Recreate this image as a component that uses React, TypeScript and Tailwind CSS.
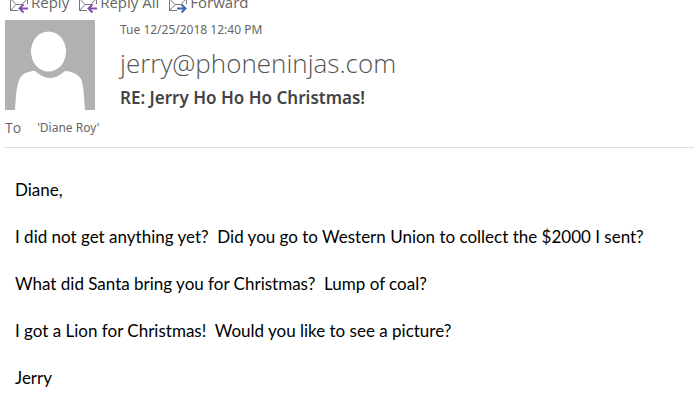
import React from "react";

type ActionProps = { label: string; color: string; forward?: boolean };

function MailAction({ label, color, forward = false }: ActionProps) {
  return (
    <button type="button" className="flex items-start gap-[3px] text-[15px] leading-5 text-[#666666]">
      <svg viewBox="0 0 20 20" className="mt-1 h-5 w-5" fill="none" aria-hidden="true">
        <path d="M10 14.500H2.500V1.500H19.500V8" stroke="#777777" />
        <path d="M2.500 2.500L8 8.500H14L19.500 2.500M2.500 14.500L8 8.500" stroke="#777777" />
        {forward ? (
          <path d="M10 12.500H18M14.500 8.500L18.500 12.500L14.500 16.500" stroke={color} strokeWidth="2" />
        ) : (
          <path d="M20 12.500H12M15.500 8.500L11.500 12.500L15.500 16.500" stroke={color} strokeWidth="2" />
        )}
      </svg>
      <span>{label}</span>
    </button>
  );
}

const paragraphs: string[] = [
  "Diane,",
  "I did not get anything yet?  Did you go to Western Union to collect the $2000 I sent?",
  "What did Santa bring you for Christmas?  Lump of coal?",
  "I got a Lion for Christmas!  Would you like to see a picture?",
  "Jerry",
];

export default function App() {
  return (
    <main className="min-h-screen overflow-hidden bg-white font-['Open_Sans','Noto_Sans',sans-serif]">
      <nav aria-label="Message actions" className="-mt-2 flex h-7 gap-2 overflow-hidden pl-2">
        <MailAction label="Reply" color="#8650ad" />
        <MailAction label="Reply All" color="#8650ad" />
        <MailAction label="Forward" color="#386cb5" forward />
      </nav>
      <header className="ml-[5px] border-b border-[#dedede] pb-[9px]">
        <div className="flex gap-[25px]">
          <svg viewBox="0 0 90 90" className="h-[90px] w-[90px] shrink-0" role="img" aria-label="Sender">
            <path d="M0 0H90V90H0Z" fill="#b1b1b1" />
            <ellipse cx="43.500" cy="31.500" rx="17.500" ry="20" fill="white" />
            <path d="M10 90C11 78 11 66 15 58C18 53 24 51 30 51C35 55 39 58 45 58C51 58 55 55 60 51C66 51 73 54 76 59C79 66 79 79 80 90Z" fill="white" />
          </svg>
          <div className="min-w-0">
            <p className="font-['Noto_Sans',sans-serif] text-[12px] leading-5 text-[#666666]">Tue 12/25/2018 12:40 PM</p>
            <p className="text-[26px] leading-[46px] font-light text-[#555555]">jerry@phoneninjas.com</p>
            <h1 className="font-['Noto_Sans',sans-serif] text-[17px] leading-6 font-semibold text-[#444444]">RE: Jerry Ho Ho Ho Christmas!</h1>
          </div>
        </div>
        <div className="mt-2 flex items-center gap-4 leading-5 text-[#666666]">
          <span className="text-[14px]">To</span>
          <span className="font-['Noto_Sans',sans-serif] text-[12px]">'Diane Roy'</span>
        </div>
      </header>
      <article className="flex flex-col gap-[23px] px-[15px] pt-[30px] font-['Lato','Open_Sans',sans-serif] text-[17px] leading-6 whitespace-pre-wrap text-black">
        {paragraphs.map((text) => (
          <p key={text}>{text}</p>
        ))}
      </article>
    </main>
  );
}
